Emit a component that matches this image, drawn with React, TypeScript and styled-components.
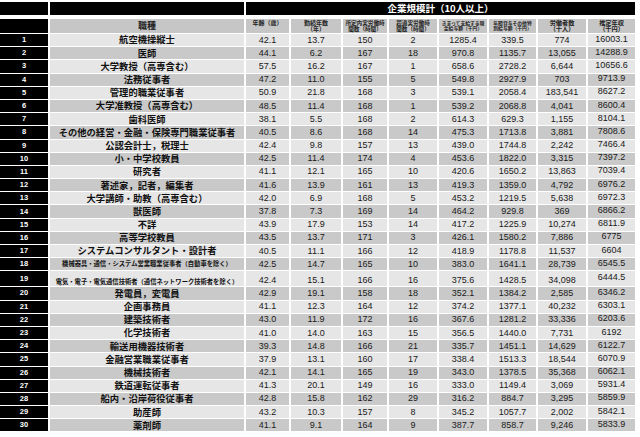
import React from 'react';
import styled, { createGlobalStyle } from 'styled-components';

const GlobalStyle = createGlobalStyle`
  html, body {
    margin: 0;
    padding: 0;
    background: #ffffff;
  }
`;

const COLS = '48px 194px 43px 50px 44px 48px 48px 47px 48px 47px';

const Page = styled.div`
  width: 640px;
  padding-top: 2px;
  font-family: "Liberation Sans", "Noto Sans CJK JP", sans-serif;
`;

const TitleBar = styled.div`
  display: grid;
  grid-template-columns: 48px 194px 1fr;
  column-gap: 2px;
  width: 635px;
  height: 13px;
`;

const Black = styled.div`
  background: #000;
`;

const Title = styled.div`
  background: #000;
  color: #fff;
  font-family: "Noto Sans CJK JP", sans-serif;
  font-weight: 700;
  font-size: 9.5px;
  display: flex;
  align-items: center;
  justify-content: center;
  line-height: 1;
`;

const Row = styled.div<{ $h: number; $top: number }>`
  display: grid;
  grid-template-columns: ${COLS};
  column-gap: 2px;
  width: 635px;
  height: ${p => p.$h}px;
  margin-top: ${p => p.$top}px;
`;

const Rank = styled.div`
  background: #000;
  color: #fff;
  font-weight: 700;
  font-size: 7.5px;
  display: flex;
  align-items: center;
  justify-content: center;
  padding-bottom: 1px;
`;

const Cell = styled.div<{ $dark: boolean; $low?: boolean; $up?: boolean }>`
  background: ${p => (p.$dark ? '#c9c9c9' : '#e6e6e6')};
  color: #1a1a1a;
  font-size: 9px;
  display: flex;
  justify-content: center;
  align-items: ${p => (p.$low ? 'flex-end' : 'center')};
  padding-bottom: ${p => (p.$low ? '1px' : p.$up ? '2px' : '0')};
  line-height: 1;
  white-space: nowrap;
`;

const Job = styled(Cell)<{ $small?: boolean }>`
  font-family: "Noto Sans CJK JP", sans-serif;
  font-weight: 700;
  font-size: ${p => (p.$small ? '6.3px' : '9.3px')};
  color: #111;
`;

const Head = styled.div<{ $size: number }>`
  background: #c6c6c6;
  color: #222;
  font-family: "Noto Sans CJK JP", sans-serif;
  font-weight: 700;
  font-size: ${p => p.$size}px;
  line-height: ${p => p.$size + 0.5}px;
  text-align: center;
  padding-top: 0.5px;
  white-space: nowrap;
  overflow: hidden;
`;

const HeadName = styled(Head)`
  display: flex;
  align-items: center;
  justify-content: center;
  padding-top: 0;
`;

type Rec = [string, string, string, string, string, string, string, string, string];

const DATA: Rec[] = [
  ['航空機操縦士', '42.1', '13.7', '150', '2', '1285.4', '339.5', '774', '16003.1'],
  ['医師', '44.1', '6.2', '167', '18', '970.8', '1135.7', '13,055', '14288.9'],
  ['大学教授（高専含む）', '57.5', '16.2', '167', '1', '658.6', '2728.2', '6,644', '10656.6'],
  ['法務従事者', '47.2', '11.0', '155', '5', '549.8', '2927.9', '703', '9713.9'],
  ['管理的職業従事者', '50.9', '21.8', '168', '3', '539.1', '2058.4', '183,541', '8627.2'],
  ['大学准教授（高専含む）', '48.5', '11.4', '168', '1', '539.2', '2068.8', '4,041', '8600.4'],
  ['歯科医師', '38.1', '5.5', '168', '2', '614.3', '629.3', '1,155', '8104.1'],
  ['その他の経営・金融・保険専門職業従事者', '40.5', '8.6', '168', '14', '475.3', '1713.8', '3,881', '7808.6'],
  ['公認会計士，税理士', '42.4', '9.8', '157', '13', '439.0', '1744.8', '2,242', '7466.4'],
  ['小・中学校教員', '42.5', '11.4', '174', '4', '453.6', '1822.0', '3,315', '7397.2'],
  ['研究者', '41.1', '12.1', '165', '10', '420.6', '1650.2', '13,863', '7039.4'],
  ['著述家，記者，編集者', '41.6', '13.9', '161', '13', '419.3', '1359.0', '4,792', '6976.2'],
  ['大学講師・助教（高専含む）', '42.0', '6.9', '168', '5', '453.2', '1219.5', '5,638', '6972.3'],
  ['獣医師', '37.8', '7.3', '169', '14', '464.2', '929.8', '369', '6866.2'],
  ['不詳', '43.9', '17.9', '153', '14', '417.2', '1225.9', '10,274', '6811.9'],
  ['高等学校教員', '43.5', '13.7', '171', '3', '426.1', '1580.2', '7,886', '6775'],
  ['システムコンサルタント・設計者', '40.5', '11.1', '166', '12', '418.9', '1178.8', '11,537', '6604'],
  ['機械器具・通信・システム営業職業従事者（自動車を除く）', '42.5', '14.7', '165', '10', '383.0', '1641.1', '28,739', '6545.5'],
  ['電気・電子・電気通信技術者（通信ネットワーク技術者を除く）', '42.4', '15.1', '166', '16', '375.6', '1428.5', '34,098', '6444.5'],
  ['発電員，変電員', '42.9', '19.1', '158', '18', '352.1', '1384.2', '2,585', '6346.2'],
  ['企画事務員', '41.1', '12.3', '164', '12', '374.2', '1377.1', '40,232', '6303.1'],
  ['建築技術者', '43.0', '11.9', '172', '16', '367.6', '1281.2', '33,336', '6203.6'],
  ['化学技術者', '41.0', '14.0', '163', '15', '356.5', '1440.0', '7,731', '6192'],
  ['輸送用機器技術者', '39.3', '14.8', '166', '21', '335.7', '1451.1', '14,629', '6122.7'],
  ['金融営業職業従事者', '37.9', '13.1', '160', '17', '338.4', '1513.3', '18,544', '6070.9'],
  ['機械技術者', '42.1', '14.1', '165', '19', '343.0', '1378.5', '35,368', '6062.1'],
  ['鉄道運転従事者', '41.3', '20.1', '149', '16', '333.0', '1149.4', '3,069', '5931.4'],
  ['船内・沿岸荷役従事者', '42.8', '15.8', '162', '29', '316.2', '884.7', '3,295', '5859.9'],
  ['助産師', '43.2', '10.3', '157', '8', '345.2', '1057.7', '2,002', '5842.1'],
  ['薬剤師', '41.1', '9.1', '164', '9', '387.7', '858.7', '9,246', '5833.9'],
];

const App: React.FC = () => {
  return (
    <Page>
      <GlobalStyle />
      <TitleBar>
        <Black />
        <Black />
        <Title>企業規模計（10人以上）</Title>
      </TitleBar>

      <Row $h={14} $top={4}>
        <Black />
        <HeadName $size={9}>職種</HeadName>
        <Head $size={6}>年齢（歳）</Head>
        <Head $size={6}>勤続年数<br />（年）</Head>
        <Head $size={5.6}>所定内実労働時<br />間数（時間）</Head>
        <Head $size={5.6}>超過実労働時<br />間数（時間）</Head>
        <Head $size={4.8}>きまって支給する現<br />金給与額（千円）</Head>
        <Head $size={4.8}>年間賞与その他特<br />別給与額（千円）</Head>
        <Head $size={6.2}>労働者数<br />（十人）</Head>
        <Head $size={6.2}>推定年収<br />（千円）</Head>
      </Row>

      {DATA.map((r, i) => {
        const n = i + 1;
        const dark = n % 2 === 0;
        const tall = n === 19;
        const small = n === 18 || n === 19;
        return (
          <Row key={n} $h={tall ? 15 : 12.2} $top={1}>
            <Rank>{n}</Rank>
            <Job $dark={dark} $small={small} $low={tall}>{r[0]}</Job>
            {r.slice(1, 8).map((v, j) => (
              <Cell key={j} $dark={dark} $low={tall}>{v}</Cell>
            ))}
            <Cell $dark={dark} $up>{r[8]}</Cell>
          </Row>
        );
      })}
    </Page>
  );
};

export default App;
